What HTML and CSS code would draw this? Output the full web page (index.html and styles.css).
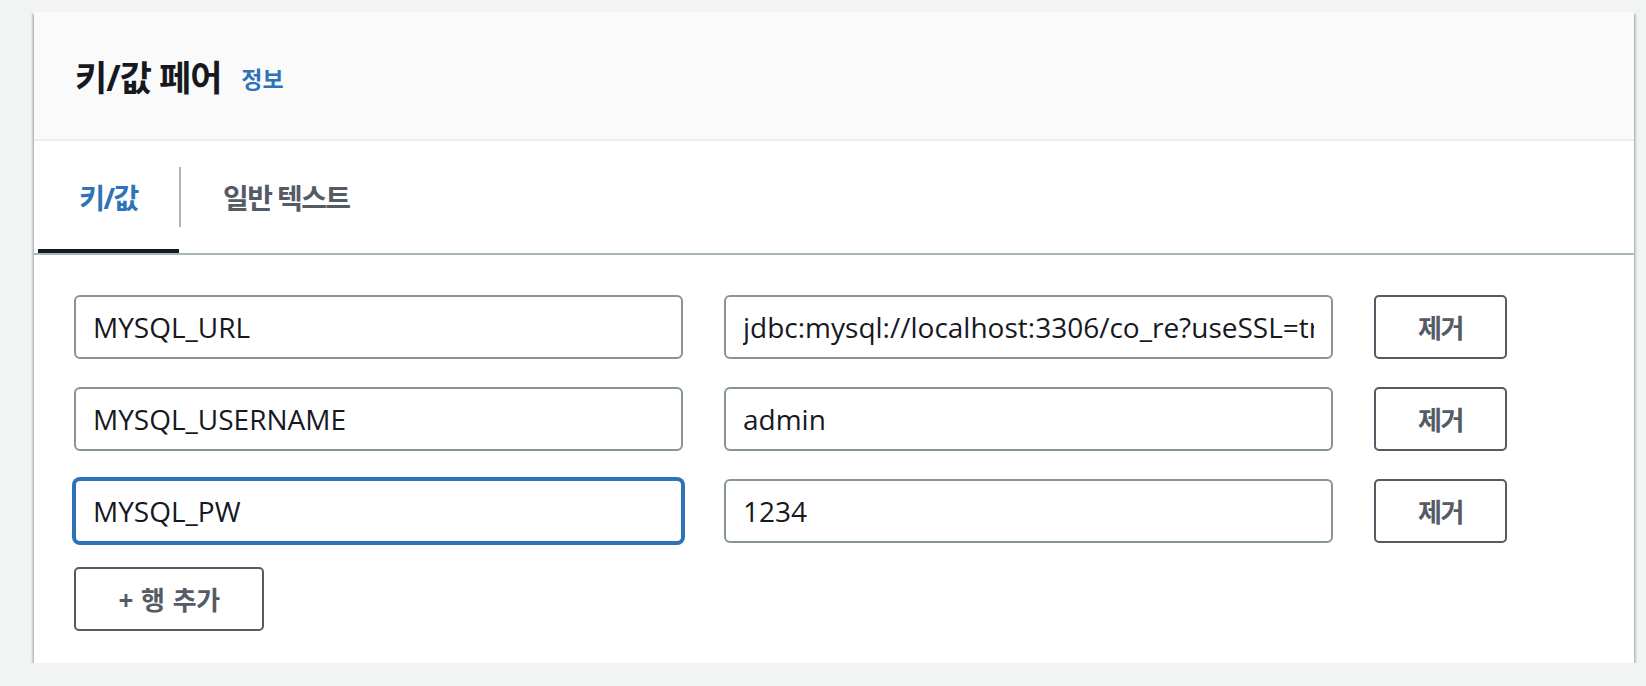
FILE: index.html
```html
<!DOCTYPE html>
<html lang="ko">
<head>
    <meta charset="UTF-8">
    <meta name="viewport" content="width=device-width, initial-scale=1.0">
    <title>키/값 페어</title>
    <link rel="stylesheet" href="styles.css">
</head>
<body>
    <div class="container">
        <div class="header">
            <h2>키/값 페어</h2>
            <a class="info-link" href="#">정보</a>
        </div>

        <div class="tabs">
            <button class="tab active">키/값</button>
            <span class="tab-divider"></span>
            <button class="tab">일반 텍스트</button>
        </div>

        <div class="pairs">
            <div class="pair-row">
                <input type="text" class="input-field" value="MYSQL_URL">
                <input type="text" class="input-field" value="jdbc:mysql://localhost:3306/co_re?useSSL=true&amp;serverTimezone=Asia/Seoul">
                <button class="btn remove-button">제거</button>
            </div>
            <div class="pair-row">
                <input type="text" class="input-field" value="MYSQL_USERNAME">
                <input type="text" class="input-field" value="admin">
                <button class="btn remove-button">제거</button>
            </div>
            <div class="pair-row">
                <input type="text" class="input-field focused" value="MYSQL_PW" autofocus>
                <input type="text" class="input-field" value="1234">
                <button class="btn remove-button">제거</button>
            </div>

            <button class="btn add-button">+ 행 추가</button>
        </div>
    </div>

    <script>
        // 포커스된 입력의 커서를 끝으로
        const focused = document.querySelector('.input-field.focused');
        focused.focus();
        focused.setSelectionRange(focused.value.length, focused.value.length);
    </script>
</body>
</html>
```

FILE: styles.css
```css
* {
    margin: 0;
    padding: 0;
    box-sizing: border-box;
}

body {
    font-family: 'Open Sans', 'Noto Sans CJK KR', sans-serif;
    background: #f2f3f3;
    color: #16191f;
    padding: 12px 12px 0 34px;
}

.container {
    background: white;
    width: 1600px;
    box-shadow: 0 2px 2px rgba(0, 28, 36, 0.3),
                2px 2px 2px rgba(0, 28, 36, 0.18),
                -2px 2px 2px rgba(0, 28, 36, 0.18);
}

.header {
    background: #fafafa;
    height: 129px;
    border-bottom: 2px solid #eaeded;
    padding-left: 41px;
    display: flex;
    align-items: center;
    gap: 20px;
}

.header h2 {
    font-size: 35px;
    font-weight: 700;
    letter-spacing: -1px;
    color: #16191f;
}

.info-link {
    font-size: 23px;
    font-weight: 700;
    color: #2e73b8;
    text-decoration: none;
    margin-top: 4px;
}

.tabs {
    display: flex;
    align-items: center;
    height: 114px;
    padding-left: 4px;
    border-bottom: 2px solid #aab7b8;
}

.tab {
    position: relative;
    height: 112px;
    background: none;
    border: none;
    font-family: inherit;
    font-size: 28px;
    font-weight: 700;
    letter-spacing: -1.6px;
    color: #545b64;
    cursor: pointer;
    padding: 0 42px;
}

.tab.active {
    width: 141px;
    padding: 0;
    color: #2e73b8;
}

.tab.active::after {
    content: '';
    position: absolute;
    left: 0;
    right: 0;
    bottom: 0;
    height: 4px;
    background: #16191f;
}

.tab-divider {
    width: 2px;
    height: 60px;
    background: #aab7b8;
}

.pairs {
    padding: 40px 0 32px 40px;
}

.pair-row {
    display: flex;
    gap: 41px;
    margin-bottom: 28px;
}

.input-field {
    width: 609px;
    height: 64px;
    padding: 0 17px;
    border: 2px solid #879596;
    border-radius: 6px;
    outline: none;
    font-family: inherit;
    font-size: 28px;
    color: #16191f;
    caret-color: #16191f;
    background: white;
}

.input-field.focused {
    border-color: #2e73b8;
    box-shadow: 0 0 0 2px #2e73b8;
}

.btn {
    height: 64px;
    background: white;
    border: 2px solid #545b64;
    border-radius: 5px;
    font-family: inherit;
    font-size: 26px;
    font-weight: 700;
    letter-spacing: -1.5px;
    color: #545b64;
    cursor: pointer;
}

.remove-button {
    width: 133px;
}

.add-button {
    width: 190px;
    margin-top: -4px;
    letter-spacing: -0.5px;
    word-spacing: 2px;
}
```
